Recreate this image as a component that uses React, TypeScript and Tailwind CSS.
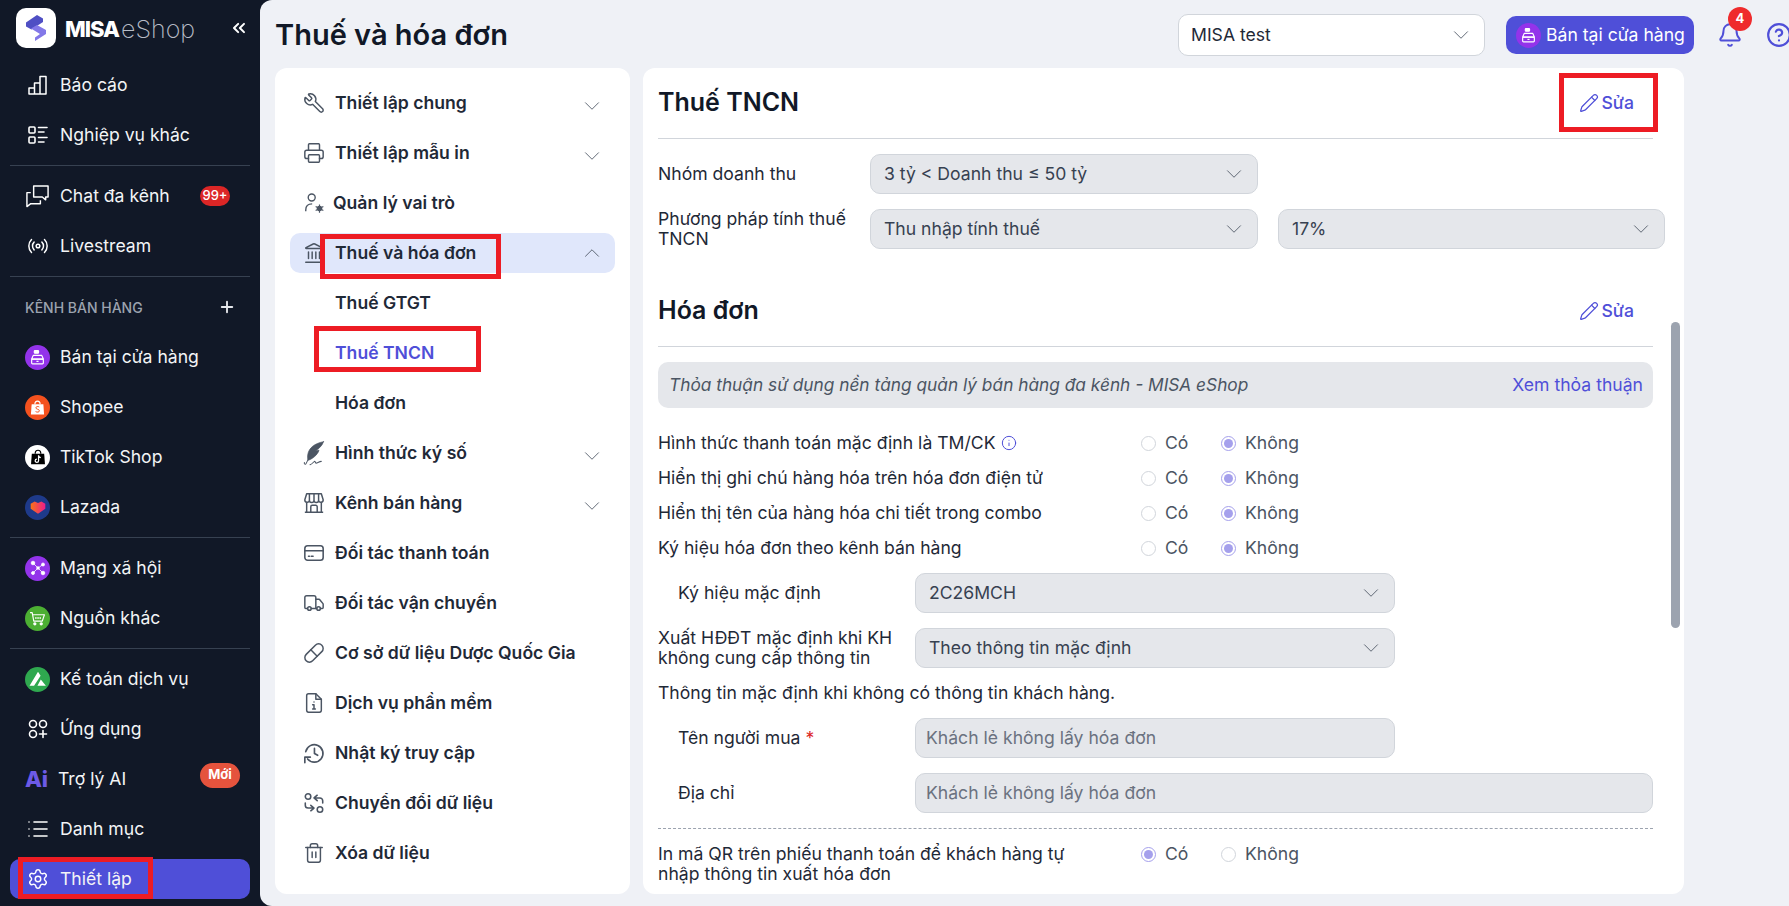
import type { ReactNode } from 'react'
import {
  Bell,
  ChevronDown,
  ChevronUp,
  ChevronsLeft,
  CircleHelp,
  Info,
  Landmark,
  List,
  Pencil,
  Pill,
  Plus,
  Printer,
  Radio,
  Settings,
  Trash2,
  Truck,
  Wrench,
} from 'lucide-react'

function ReportIcon() {
  return (
    <svg viewBox="0 0 22 22" className="h-[22px] w-[22px]" fill="none" stroke="currentColor" strokeWidth="1.5" strokeLinejoin="round">
      <path d="M2 20v-6h5.500v6zM7.500 20V9H13v11zM13 20V2.500h6V20zM2 20h17" />
    </svg>
  )
}

function TasksIcon() {
  return (
    <svg viewBox="0 0 22 22" className="h-[22px] w-[22px]" fill="none" stroke="currentColor" strokeWidth="1.6" strokeLinecap="round">
      <rect x="2" y="3" width="6" height="6" rx="1" />
      <rect x="2" y="13" width="6" height="6" rx="1" />
      <path d="M11.500 3.500H20M11.500 8H17M11.500 13.500H20M11.500 18H17" />
    </svg>
  )
}

function ChatIcon() {
  return (
    <svg viewBox="0 0 26 26" className="h-[26px] w-[26px]" fill="none" stroke="currentColor" strokeWidth="1.5" strokeLinejoin="round">
      <path d="M9 2.500h15V14h-2.500v3L18 14H9z" />
      <path d="M6 9.500H2V24l4-3h10v-3.500" />
    </svg>
  )
}

function AppsIcon() {
  return (
    <svg viewBox="0 0 22 22" className="h-[22px] w-[22px]" fill="none" stroke="currentColor" strokeWidth="1.6" strokeLinecap="round">
      <circle cx="6" cy="6" r="3.500" />
      <circle cx="16" cy="6" r="3.500" />
      <circle cx="6" cy="16" r="3.500" />
      <path d="M16 12.500v7M12.500 16h7" />
    </svg>
  )
}

function LogoMark() {
  return (
    <svg viewBox="0 0 40 40" className="h-10 w-10">
      <rect width="40" height="40" rx="10" fill="#fff" />
      <path d="M21 7 27 10.500 27 14 15.500 21.500 10 18.500 10 14.500z" fill="#4f4fc4" />
      <path d="M15 20.500 21 17 30 22 30 26 19 33 19 29.500 24 26z" fill="#8378e8" />
    </svg>
  )
}

function CashierIcon({ size }: { size: number }) {
  return (
    <svg viewBox="0 0 16 16" width={size} height={size} fill="none" stroke="#fff" strokeWidth="1.100" strokeLinejoin="round">
      <rect x="5" y="1.500" width="4" height="2.500" rx="0.600" fill="#fff" />
      <path d="M4 6h8l1.500 3.500h-11z" />
      <rect x="2.500" y="9.500" width="11" height="4.500" rx="0.800" />
      <path d="M7 11.700h2" />
    </svg>
  )
}

function ChannelDot({ className, children }: { className: string; children: ReactNode }) {
  return <span className={`flex h-[25px] w-[25px] items-center justify-center overflow-hidden rounded-full ${className}`}>{children}</span>
}

type SideItem = { label: string; icon: ReactNode; badge?: ReactNode; textClass?: string; active?: boolean }

const topItems: SideItem[] = [
  { label: 'Báo cáo', icon: <ReportIcon /> },
  { label: 'Nghiệp vụ khác', icon: <TasksIcon /> },
]

const chatItems: SideItem[] = [
  {
    label: 'Chat đa kênh',
    icon: <ChatIcon />,
    badge: <span className="ml-auto mr-[20px] flex h-5 w-[30px] items-center justify-center rounded-full bg-[#dc2626] text-[13px] font-medium text-white">99+</span>,
  },
  { label: 'Livestream', icon: <Radio size={22} strokeWidth={1.6} /> },
]

const channelItems: SideItem[] = [
  { label: 'Bán tại cửa hàng', icon: <ChannelDot className="bg-[#9333ea]"><CashierIcon size={17} /></ChannelDot> },
  {
    label: 'Shopee',
    icon: (
      <ChannelDot className="bg-[#f4511e]">
        <svg viewBox="0 0 16 16" className="h-[17px] w-[17px]">
          <path d="M2.500 5h11l.7 9.500H1.800z" fill="#fff" />
          <path d="M5.500 5c0-4 5-4 5 0" fill="none" stroke="#fff" strokeWidth="1" />
          <path d="M9.700 7.500C8.500 6.700 6.500 7 6.500 8.300c0 1.700 3.300 1 3.300 2.800 0 1.400-2.200 1.600-3.600.7" fill="none" stroke="#f4511e" strokeWidth="0.900" />
        </svg>
      </ChannelDot>
    ),
  },
  {
    label: 'TikTok Shop',
    icon: (
      <ChannelDot className="bg-white">
        <svg viewBox="0 0 16 16" className="h-[18px] w-[18px]">
          <path d="M2.500 5h11l.7 9.500H1.800z" fill="#000" />
          <path d="M5.500 5c0-4 5-4 5 0" fill="none" stroke="#000" strokeWidth="1.100" />
          <path d="M8.500 6.500v4.800a1.500 1.500 0 1 1-1.500-1.500M8.500 6.700c.2 1.100 1 1.700 2 1.800" fill="none" stroke="#fff" strokeWidth="1.100" />
        </svg>
      </ChannelDot>
    ),
  },
  {
    label: 'Lazada',
    icon: (
      <ChannelDot className="bg-[#1e3a8a]">
        <svg viewBox="0 0 16 16" className="h-[18px] w-[18px]">
          <defs>
            <linearGradient id="laz" x1="0" x2="1" y1="0" y2="0">
              <stop offset="0" stopColor="#f97316" />
              <stop offset="1" stopColor="#ec1c8c" />
            </linearGradient>
          </defs>
          <path d="M1.500 5 5 3l3 1.500L11 3l3.500 2v4.500L8 14 1.500 9.500z" fill="url(#laz)" />
        </svg>
      </ChannelDot>
    ),
  },
]

const socialItems: SideItem[] = [
  {
    label: 'Mạng xã hội',
    icon: (
      <ChannelDot className="bg-[#9333ea]">
        <svg viewBox="0 0 16 16" className="h-[16px] w-[16px]" fill="#fff" stroke="#fff" strokeWidth="0.800">
          <path d="M3 3l5 5M13 4.500 8 8M3 13l5-5M13 13 8 8" />
          <circle cx="3" cy="3" r="1.800" />
          <circle cx="13" cy="4.500" r="1.500" />
          <circle cx="3" cy="13" r="1.500" />
          <circle cx="13" cy="13" r="1.800" />
          <circle cx="8" cy="8" r="1.300" />
        </svg>
      </ChannelDot>
    ),
  },
  {
    label: 'Nguồn khác',
    icon: (
      <ChannelDot className="bg-[#4caf33]">
        <svg viewBox="0 0 16 16" className="h-[17px] w-[17px]" fill="none" stroke="#fff" strokeWidth="1.100" strokeLinejoin="round">
          <path d="M1 2.500h2l1.500 8h8L14.500 4.500H3.500" />
          <path d="M6.500 6.500v2M8.500 6.500v2M10.500 6.500v2" />
          <circle cx="5.500" cy="13" r="1" fill="#fff" />
          <circle cx="11.500" cy="13" r="1" fill="#fff" />
        </svg>
      </ChannelDot>
    ),
  },
]

const bottomItems: SideItem[] = [
  {
    label: 'Kế toán dịch vụ',
    icon: (
      <ChannelDot className="bg-[#2fa84f]">
        <svg viewBox="0 0 16 16" className="h-[18px] w-[18px]" fill="#fff">
          <path d="M8 1.500 10.300 5 4.500 14H.500zM10.500 8.500 15 14H7.500z" />
        </svg>
      </ChannelDot>
    ),
  },
  { label: 'Ứng dụng', icon: <AppsIcon /> },
  {
    label: 'Trợ lý AI',
    textClass: 'ml-2',
    icon: <span className="-translate-x-[1px] text-[22px] font-extrabold leading-none text-[#6d5ae6]">Ai</span>,
    badge: <span className="ml-auto mr-[10px] flex h-[25px] w-10 -translate-y-[4px] items-center justify-center rounded-full bg-[#e5533d] text-[13px] font-bold text-white">Mới</span>,
  },
  { label: 'Danh mục', icon: <List size={24} strokeWidth={1.6} /> },
  { label: 'Thiết lập', icon: <Settings size={22} strokeWidth={1.6} />, active: true },
]

function SideRow({ item }: { item: SideItem }) {
  return (
    <div className={`relative mx-[10px] my-[5px] flex h-10 items-center rounded-[10px] pl-[15px] ${item.active ? 'bg-[#4f4fd8]' : ''}`}>
      <span className="flex w-[25px] shrink-0 items-center justify-center">{item.icon}</span>
      <span className={`text-[17.6px] text-[#f3f4f6] ${item.textClass ?? 'ml-[10px]'}`}>{item.label}</span>
      {item.badge}
    </div>
  )
}

function SideDivider() {
  return <div className="mx-[10px] my-[5px] border-t border-[#374151]" />
}

function Sidebar() {
  return (
    <aside className="flex h-full w-[260px] shrink-0 flex-col text-white">
      <div className="flex h-[60px] items-center pb-[4px] pl-4">
        <LogoMark />
        <span className="ml-[9px] mt-[3px] text-[22px] font-extrabold tracking-[-1px] text-white">MISA</span>
        <span className="ml-[2px] mt-[3px] text-[25px] font-extralight text-[#b7bcc6]">eShop</span>
        <ChevronsLeft size={20} strokeWidth={2.400} className="ml-auto mr-[11px] text-white" />
      </div>
      {topItems.map((i) => <SideRow key={i.label} item={i} />)}
      <SideDivider />
      {chatItems.map((i) => <SideRow key={i.label} item={i} />)}
      <SideDivider />
      <div className="flex h-[50px] items-center pl-[25px] pr-[24px] text-[14px] font-medium text-[#9ca3af]">
        KÊNH BÁN HÀNG
        <Plus size={18} strokeWidth={2.500} className="ml-auto text-[#e5e7eb]" />
      </div>
      {channelItems.map((i) => <SideRow key={i.label} item={i} />)}
      <SideDivider />
      {socialItems.map((i) => <SideRow key={i.label} item={i} />)}
      <SideDivider />
      {bottomItems.map((i) => <SideRow key={i.label} item={i} />)}
    </aside>
  )
}

function UserGearIcon() {
  return (
    <svg viewBox="0 0 24 24" className="h-[22px] w-[22px]" fill="none" stroke="currentColor" strokeWidth="1.500">
      <circle cx="9.500" cy="6" r="3.800" />
      <path d="M3 21v-1.500C3 15 6 13 10 13" />
      <circle cx="18" cy="18" r="2.300" fill="currentColor" />
      <path d="M18 13.500v9M13.800 15.800l8.400 4.400M13.800 20.200l8.400-4.400" strokeWidth="1.300" />
    </svg>
  )
}

function CardIcon() {
  return (
    <svg viewBox="0 0 24 24" className="h-[22px] w-[22px]" fill="none" stroke="currentColor" strokeWidth="1.700" strokeLinecap="round">
      <rect x="2" y="4" width="20" height="16" rx="3" />
      <path d="M2 9.500h20M6 15.500h1M9 15.500h2" />
    </svg>
  )
}

function FileInfoIcon() {
  return (
    <svg viewBox="0 0 24 24" className="h-[22px] w-[22px]" fill="none" stroke="currentColor" strokeWidth="1.600" strokeLinecap="round" strokeLinejoin="round">
      <path d="M4 4a2 2 0 0 1 2-2h8l6 6v12a2 2 0 0 1-2 2H6a2 2 0 0 1-2-2z" />
      <path d="M14 2v6h6M12 11h.01M10.500 14H12v4.500M10.500 18.500h3" />
    </svg>
  )
}

function ConvertIcon() {
  return (
    <svg viewBox="0 0 24 24" className="h-[22px] w-[22px]" fill="none" stroke="currentColor" strokeWidth="1.700" strokeLinecap="round" strokeLinejoin="round">
      <circle cx="5.500" cy="5" r="3" />
      <circle cx="18.500" cy="19" r="3" />
      <path d="M2.500 12v2.500a3 3 0 0 0 3 3H12M8.500 14.500 12 17.500l-3.500 3M21.500 12V9.500a3 3 0 0 0-3-3H12M15.500 9.500 12 6.500l3.500-3" />
    </svg>
  )
}

function QuillIcon() {
  return (
    <svg viewBox="0 0 24 24" className="h-[27px] w-[27px] shrink-0" fill="currentColor" stroke="currentColor" strokeWidth="0.600" strokeLinecap="round" strokeLinejoin="round">
      <path d="M20 1.500C12 3 7 7 6 13c-.3 2-.2 3.500.3 5C10 17 15 13 16 9l-3 .500C16 7.500 19 5 20 1.500z" />
      <path d="M9 12 4.500 21c-.5 1-2 .500-1.500-1M8 22c2-.500 3-2.500 4-3 1 0 .500 2 2 1.500 1.500-.500 2.500-1.500 4-1.500" fill="none" strokeWidth="0.900" />
    </svg>
  )
}

function ShopIcon() {
  return (
    <svg viewBox="0 0 24 24" className="h-[22px] w-[22px]" fill="none" stroke="currentColor" strokeWidth="1.600" strokeLinejoin="round">
      <path d="M4 2h16l2 6.500a2.500 2.500 0 0 1-5 .5 2.500 2.500 0 0 1-5 0 2.500 2.500 0 0 1-5 0 2.500 2.500 0 0 1-5-.5zM7 2 7 9M12 2v7M17 2v7" />
      <path d="M4 11.500V22h16V11.500M2 22h20M8.500 22v-6a1.500 1.500 0 0 1 1.500-1.500h4a1.500 1.500 0 0 1 1.500 1.500v6" />
    </svg>
  )
}

function ClockBackIcon() {
  return (
    <svg viewBox="0 0 24 24" className="h-[22px] w-[22px]" fill="none" stroke="currentColor" strokeWidth="1.800" strokeLinecap="round" strokeLinejoin="round">
      <path d="M3 10.500A9.500 9.500 0 1 1 5 18.500" />
      <path d="M2 22.500v-6h6M12.500 7v5.500l3.500 2" />
    </svg>
  )
}

type MenuItem = { label: string; icon?: ReactNode; chevron?: boolean; open?: boolean; sub?: boolean; current?: boolean; textClass?: string }

const ic = { size: 22, strokeWidth: 1.6 }

const menu: MenuItem[] = [
  { label: 'Thiết lập chung', icon: <Wrench {...ic} className="-scale-x-100" />, chevron: true },
  { label: 'Thiết lập mẫu in', icon: <Printer {...ic} />, chevron: true },
  { label: 'Quản lý vai trò', icon: <UserGearIcon />, textClass: 'ml-[7px]' },
  { label: 'Thuế và hóa đơn', icon: <Landmark {...ic} />, chevron: true, open: true },
  { label: 'Thuế GTGT', sub: true },
  { label: 'Thuế TNCN', sub: true, current: true },
  { label: 'Hóa đơn', sub: true },
  { label: 'Hình thức ký số', icon: <QuillIcon />, chevron: true },
  { label: 'Kênh bán hàng', icon: <ShopIcon />, chevron: true },
  { label: 'Đối tác thanh toán', icon: <CardIcon /> },
  { label: 'Đối tác vận chuyển', icon: <Truck {...ic} /> },
  { label: 'Cơ sở dữ liệu Dược Quốc Gia', icon: <Pill {...ic} /> },
  { label: 'Dịch vụ phần mềm', icon: <FileInfoIcon /> },
  { label: 'Nhật ký truy cập', icon: <ClockBackIcon /> },
  { label: 'Chuyển đổi dữ liệu', icon: <ConvertIcon /> },
  { label: 'Xóa dữ liệu', icon: <Trash2 {...ic} /> },
]

function Annotation({ className }: { className: string }) {
  return <span className={`pointer-events-none absolute border-[5px] border-[#ed1c24] ${className}`} />
}

function MenuRow({ item }: { item: MenuItem }) {
  return (
    <div className={`relative mx-[15px] my-[5px] flex h-10 shrink-0 items-center rounded-[10px] pl-[12px] pr-[10px] ${item.open ? 'bg-[#e0e7fb]' : ''}`}>
      <span className="flex w-[24px] shrink-0 items-center justify-center text-[#4b5563]">{item.icon}</span>
      <span className={`text-[17.6px] font-semibold ${item.current ? 'text-[#4f4fd8]' : 'text-[#1f2937]'} ${item.textClass ?? 'ml-[9px]'}`}>{item.label}</span>
      {item.chevron && (item.open
        ? <ChevronUp size={26} strokeWidth={0.800} className="ml-auto text-[#4b5563]" />
        : <ChevronDown size={26} strokeWidth={0.800} className="ml-auto translate-y-[3px] text-[#4b5563]" />)}
      {item.open && <Annotation className="left-[30px] top-[1px] h-[45px] w-[181px]" />}
      {item.current && <Annotation className="left-[24px] top-[-7px] h-[46px] w-[167px]" />}
    </div>
  )
}

function SelectBox({ value, className }: { value: string; className: string }) {
  return (
    <div className={`flex h-10 shrink-0 items-center justify-between rounded-[10px] border border-[#d1d5db] bg-[#e5e7eb] pl-[13px] pr-[10px] text-[17.6px] text-[#374151] ${className}`}>
      {value}
      <ChevronDown size={26} strokeWidth={0.800} className="text-[#4b5563]" />
    </div>
  )
}

function InputBox({ value, className }: { value: string; className: string }) {
  return (
    <div className={`flex h-10 shrink-0 items-center rounded-[10px] border border-[#d1d5db] bg-[#e5e7eb] pl-[10px] text-[17.6px] text-[#6b7280] ${className}`}>
      {value}
    </div>
  )
}

function RadioDot({ checked, label, className }: { checked: boolean; label: string; className: string }) {
  return (
    <span className={`flex items-center text-[17.6px] text-[#4b5563] ${className}`}>
      <span className={`flex h-[15px] w-[15px] items-center justify-center rounded-full border ${checked ? 'border-[#a5a0ec]' : 'border-[#d1d5db]'}`}>
        {checked && <span className="h-[9px] w-[9px] rounded-full bg-[#a5a0ec]" />}
      </span>
      <span className="ml-[9px]">{label}</span>
    </span>
  )
}

function YesNo({ yes }: { yes: boolean }) {
  return (
    <span className="ml-auto flex h-5 w-[512px] shrink-0 items-center">
      <RadioDot checked={yes} label="Có" className="w-[80px]" />
      <RadioDot checked={!yes} label="Không" className="" />
    </span>
  )
}

function SectionHead({ title, children }: { title: string; children: ReactNode }) {
  return (
    <div className="flex h-[71px] items-center justify-between border-b border-[#d1d5db] pr-[19px]">
      <h2 className="text-[25px] font-semibold text-[#111827]">{title}</h2>
      {children}
    </div>
  )
}

function EditBtn() {
  return (
    <span className="flex items-center gap-[3px] text-[17.6px] font-medium text-[#4f4fd8]">
      <Pencil size={20} strokeWidth={1.500} />
      Sửa
    </span>
  )
}

const radioRows: { label: ReactNode; yes: boolean }[] = [
  {
    label: (
      <span className="flex items-center gap-[6px]">
        Hình thức thanh toán mặc định là TM/CK
        <Info size={16} strokeWidth={1.500} className="text-[#4f4fd8]" />
      </span>
    ),
    yes: false,
  },
  { label: 'Hiển thị ghi chú hàng hóa trên hóa đơn điện tử', yes: false },
  { label: 'Hiển thị tên của hàng hóa chi tiết trong combo', yes: false },
  { label: 'Ký hiệu hóa đơn theo kênh bán hàng', yes: false },
]

function TaxPanel() {
  return (
    <section className="relative h-full w-[1041px] shrink-0 overflow-hidden rounded-xl bg-white pl-[15px] pr-[31px] text-[17.6px] text-[#1f2937]">
      <div className="relative">
        <SectionHead title="Thuế TNCN"><EditBtn /></SectionHead>
        <Annotation className="right-[-5px] top-[5px] h-[59px] w-[99px]" />
      </div>
      <div className="mt-[15px] flex items-center">
        <span className="w-[212px] shrink-0">Nhóm doanh thu</span>
        <SelectBox value="3 tỷ < Doanh thu ≤ 50 tỷ" className="w-[388px]" />
      </div>
      <div className="mt-[15px] flex items-center">
        <span className="w-[212px] shrink-0 leading-[20px]">Phương pháp tính thuế TNCN</span>
        <SelectBox value="Thu nhập tính thuế" className="w-[388px]" />
        <SelectBox value="17%" className="ml-5 w-[387px]" />
      </div>

      <div className="mt-[27px]">
        <SectionHead title="Hóa đơn"><EditBtn /></SectionHead>
      </div>
      <div className="mt-[15px] flex h-[46px] items-center justify-between rounded-[10px] bg-[#e5e7eb] pl-[11px] pr-[10px]">
        <span className="text-[17.3px] italic text-[#4b5563]">Thỏa thuận sử dụng nền tảng quản lý bán hàng đa kênh - MISA eShop</span>
        <span className="text-[#4f4fd8]">Xem thỏa thuận</span>
      </div>
      <div className="mt-[18px]">
        {radioRows.map((r, i) => (
          <div key={i} className="flex h-[35px] items-center">
            {r.label}
            <YesNo yes={r.yes} />
          </div>
        ))}
      </div>
      <div className="mt-[7px] flex items-center">
        <span className="w-[257px] shrink-0 pl-5">Ký hiệu mặc định</span>
        <SelectBox value="2C26MCH" className="w-[480px]" />
      </div>
      <div className="mt-[15px] flex items-center">
        <span className="w-[257px] shrink-0 leading-[20px]">Xuất HĐĐT mặc định khi KH không cung cấp thông tin</span>
        <SelectBox value="Theo thông tin mặc định" className="w-[480px]" />
      </div>
      <div className="mt-[15px] leading-[20px]">Thông tin mặc định khi không có thông tin khách hàng.</div>
      <div className="mt-[15px] flex items-center">
        <span className="w-[257px] shrink-0 pl-5">Tên người mua <span className="text-[#dc2626]">*</span></span>
        <InputBox value="Khách lẻ không lấy hóa đơn" className="w-[480px]" />
      </div>
      <div className="mt-[15px] flex items-center">
        <span className="w-[257px] shrink-0 pl-5">Địa chỉ</span>
        <InputBox value="Khách lẻ không lấy hóa đơn" className="w-[738px]" />
      </div>
      <div className="mt-[15px] border-t border-dashed border-[#9ca3af]" />
      <div className="mt-[15px] flex items-start">
        <span className="w-[440px] leading-[20px]">In mã QR trên phiếu thanh toán để khách hàng tự nhập thông tin xuất hóa đơn</span>
        <YesNo yes />
      </div>
      {/* scroll thumb */}
      <span className="absolute right-[4px] top-[254px] h-[306px] w-[9px] rounded-full bg-[#9ca3af]" />
    </section>
  )
}

export default function App() {
  return (
    <div className="relative flex h-screen w-full overflow-hidden bg-[#111827] [font-family:Inter,'Noto_Sans',sans-serif]">
      <Sidebar />
      <main className="flex min-w-0 flex-1 flex-col overflow-hidden rounded-l-xl bg-[#eff1f6]">
        <header className="flex h-[68px] shrink-0 items-center pl-[15px] pt-[2px]">
          <h1 className="w-[903px] shrink-0 text-[29px] font-semibold text-[#111827]">Thuế và hóa đơn</h1>
          <div className="flex h-[42px] w-[307px] shrink-0 items-center justify-between rounded-[10px] border border-[#d1d5db] bg-white pl-[12px] pr-[10px] text-[17.6px] text-[#1f2937]">
            MISA test
            <ChevronDown size={26} strokeWidth={0.800} className="text-[#4b5563]" />
          </div>
          <button className="ml-[21px] flex h-[38px] w-[188px] shrink-0 items-center rounded-[10px] bg-[#4f4fd8] pl-[10px] text-[17.6px] text-white">
            <span className="mr-[5px] flex h-[25px] w-[25px] items-center justify-center rounded-full bg-[#9333ea]"><CashierIcon size={17} /></span>
            Bán tại cửa hàng
          </button>
          <div className="relative ml-[23px] shrink-0 text-[#4f4fd8]">
            <Bell size={26} strokeWidth={1.800} />
            <span className="absolute -right-[9px] -top-[15px] flex h-[24px] w-[24px] items-center justify-center rounded-full bg-[#ef2b2d] text-[13px] font-bold text-white">4</span>
          </div>
          <CircleHelp size={26} strokeWidth={2} className="ml-[23px] shrink-0 text-[#4f4fd8]" />
        </header>
        <div className="flex h-[826px] gap-[13px] pl-[15px]">
          <nav className="flex h-full w-[355px] shrink-0 flex-col rounded-xl bg-white pt-[10px]">
            {menu.map((m) => <MenuRow key={m.label} item={m} />)}
          </nav>
          <TaxPanel />
        </div>
      </main>
      <Annotation className="bottom-[7px] left-[18px] h-[42px] w-[135px]" />
    </div>
  )
}
